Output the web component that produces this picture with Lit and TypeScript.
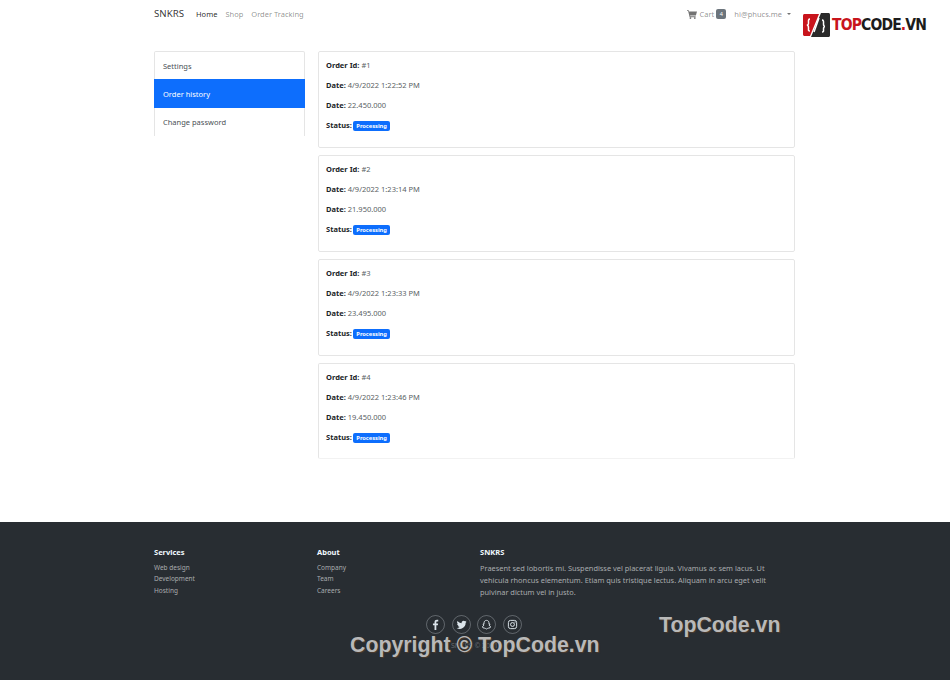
import { LitElement, html, css, svg } from "lit";
import { customElement } from "lit/decorators.js";

const orders = [
  { id: 1, date: "4/9/2022 1:22:52 PM", total: "22.450.000" },
  { id: 2, date: "4/9/2022 1:23:14 PM", total: "21.950.000" },
  { id: 3, date: "4/9/2022 1:23:33 PM", total: "23.495.000" },
  { id: 4, date: "4/9/2022 1:23:46 PM", total: "19.450.000" },
];

const icons = [
  svg`<path fill="currentColor" d="M9.2 16V9.1h2.2l.4-2.6H9.2V4.9c0-.8.3-1.3 1.4-1.3H12V1.2C11.700 1.100 10.900 1 10 1 8 1 6.600 2.200 6.600 4.500v2H4.300v2.600h2.300V16z"/>`,
  svg`<path fill="currentColor" d="M15.500 3.900c-.5.200-1.100.4-1.700.5.600-.4 1.100-1 1.300-1.700-.6.300-1.200.6-1.900.7a3 3 0 0 0-5.100 2.700A8.400 8.400 0 0 1 2 3a3 3 0 0 0 .9 4c-.5 0-1-.2-1.400-.4 0 1.500 1 2.700 2.400 3-.4.100-.9.100-1.300 0 .4 1.200 1.500 2.100 2.800 2.100A6 6 0 0 1 .9 13a8.500 8.500 0 0 0 13.100-7.500c.6-.4 1.100-1 1.500-1.600z"/>`,
  svg`<path fill="none" stroke="currentColor" stroke-width="1.300" stroke-linejoin="round" d="M8 2c2.200 0 3.600 1.600 3.600 3.600v1.900l1.400-.3c.3.300.2.700-.2.900l-1 .5c.3 1.300 1.300 2.400 2.500 2.900-.1.500-.9.700-1.800.9l-.3 1c-1-.2-1.900-.2-2.600.3-.6.500-1 .8-1.600.8s-1-.3-1.600-.8c-.7-.5-1.600-.5-2.600-.3l-.3-1c-.9-.2-1.700-.4-1.800-.9 1.200-.5 2.200-1.600 2.500-2.900l-1-.5c-.4-.2-.5-.6-.2-.9l1.400.3V5.600C4.400 3.600 5.800 2 8 2z"/>`,
  svg`<rect x="2" y="2" width="12" height="12" rx="3.200" fill="none" stroke="currentColor" stroke-width="1.400"/><circle cx="8" cy="8" r="2.800" fill="none" stroke="currentColor" stroke-width="1.400"/><circle cx="11.600" cy="4.400" r=".9" fill="currentColor"/>`,
];

@customElement("app-root")
export class AppRoot extends LitElement {
  static styles = css`
    :host {
      display: flex;
      flex-direction: column;
      position: relative;
      height: 680px;
      overflow: hidden;
      background: #fff;
      color: #212529;
      font-family: "Noto Sans", "Open Sans", sans-serif;
      font-size: 7.500px;
      line-height: 12px;
    }
    .nav {
      height: 28px;
      padding: 0 159px 0 154px;
      display: flex;
      align-items: center;
      color: rgba(0, 0, 0, 0.45);
    }
    .brand { font-size: 9.700px; color: rgba(0, 0, 0, 0.8); margin-right: 12px; }
    .links { display: flex; gap: 8px; flex: 1; }
    .links .on { color: rgba(0, 0, 0, 0.85); }
    .right { display: flex; align-items: center; }
    .cart { width: 10px; height: 10px; margin-right: 2px; color: rgba(0, 0, 0, 0.55); }
    .count {
      background: #6c757d;
      color: #fff;
      font-size: 5.500px;
      line-height: 10px;
      padding: 0 3.500px;
      border-radius: 2px;
      margin: 0 8px 0 2px;
    }
    .caret {
      width: 0;
      height: 0;
      margin-left: 5px;
      border: 2.500px solid transparent;
      border-top-color: rgba(0, 0, 0, 0.55);
      border-bottom: 0;
    }
    .main {
      flex: 1;
      padding: 23px 155px 0 154px;
      display: grid;
      grid-template-columns: 151px 477px;
      gap: 13px;
      align-items: start;
    }
    .menu {
      border: 1px solid rgba(0, 0, 0, 0.1);
      border-bottom: 0;
      border-radius: 2px 2px 0 0;
      display: grid;
      grid-template-rows: 27px 29px 28px;
    }
    .menu div { display: flex; align-items: center; padding: 0 8px; color: #4a4f55; }
    .menu .active { background: #0d6efd; color: #fff; margin: 0 -1px; padding-left: 9px; }
    .list { display: flex; flex-direction: column; gap: 7px; }
    .card {
      height: 97px;
      box-sizing: border-box;
      border: 1px solid rgba(0, 0, 0, 0.1);
      border-radius: 2px;
      padding: 7px 7px;
      display: flex;
      flex-direction: column;
      gap: 8px;
    }
    .card:last-child { height: 96px; border-bottom-color: rgba(0, 0, 0, 0.05); }
    b { font-weight: 700; color: #212529; }
    .val { color: #5a5f65; }
    .badge {
      display: inline-block;
      background: #0d6efd;
      color: #fff;
      font-size: 5.700px;
      font-weight: 700;
      line-height: 10px;
      padding: 0 3.500px;
      border-radius: 2px;
      margin-left: -1px;
    }
    footer {
      height: 158px;
      box-sizing: border-box;
      background: #282d32;
      color: #a9acae;
      padding: 24px 155px 0 154px;
    }
    .cols {
      display: grid;
      grid-template-columns: 151px 151px 1fr;
      gap: 12px;
      font-size: 6.500px;
      line-height: 11.400px;
    }
    h3 { margin: 0 0 4px; font-size: 7.500px; line-height: 12px; color: #f0f9ff; font-weight: 700; }
    .desc { font-size: 7.400px; line-height: 12px; margin: 0; padding-right: 20px; }
    .socials { display: flex; justify-content: center; gap: 6.500px; margin: 17px 0 0 -1px; }
    .socials span {
      width: 19px;
      height: 19px;
      box-sizing: border-box;
      border: 1px solid rgba(240, 249, 255, 0.28);
      border-radius: 50%;
      display: flex;
      align-items: center;
      justify-content: center;
      color: rgba(240, 249, 255, 0.9);
    }
    .socials svg { width: 11px; height: 11px; }
    .copy { text-align: center; font-size: 7px; margin-top: 6px; color: rgba(240, 249, 255, 0.3); }
    .mark {
      position: absolute;
      font-family: "Liberation Sans", Arial, sans-serif;
      font-weight: 700;
      font-size: 21.300px;
      line-height: 24px;
      color: #b9b9b9;
      text-shadow: 1px 1px 1px #4c3a2c;
      white-space: nowrap;
    }
    .m1 { left: 350px; top: 633px; }
    .m2 { left: 659px; top: 613px; }
    .logo {
      position: absolute;
      left: 803px;
      top: 12px;
      display: flex;
      align-items: center;
      gap: 2px;
    }
    .logo svg { width: 27px; height: 26px; }
    .logo span {
      font-family: "DejaVu Sans", sans-serif;
      font-weight: 700;
      font-stretch: condensed;
      font-size: 15.500px;
      line-height: 26px;
      letter-spacing: -0.850px;
      color: #1c1c1c;
      white-space: nowrap;
    }
    .logo i { font-style: normal; color: #c8141c; }
  `;

  render() {
    return html`
      <nav class="nav">
        <span class="brand">SNKRS</span>
        <div class="links"><span class="on">Home</span><span>Shop</span><span>Order Tracking</span></div>
        <div class="right">
          <svg class="cart" viewBox="0 0 16 16"><path fill="currentColor" d="M0 2h2.700l.6 2H16l-1.800 6.500H5l.3 1.200h8.500V13H4.200L1.800 3.300H0z"/><circle cx="5.500" cy="14.500" r="1.400" fill="currentColor"/><circle cx="12.500" cy="14.500" r="1.400" fill="currentColor"/></svg>
          <span>Cart</span><span class="count">4</span>
          <span>hi@phucs.me</span><span class="caret"></span>
        </div>
      </nav>
      <div class="main">
        <div class="menu">
          <div>Settings</div>
          <div class="active">Order history</div>
          <div>Change password</div>
        </div>
        <div class="list">
          ${orders.map(
            (o) => html`
              <div class="card">
                <div><b>Order Id:</b> <span class="val">#${o.id}</span></div>
                <div><b>Date:</b> <span class="val">${o.date}</span></div>
                <div><b>Date:</b> <span class="val">${o.total}</span></div>
                <div><b>Status:</b> <span class="badge">Processing</span></div>
              </div>
            `
          )}
        </div>
      </div>
      <footer>
        <div class="cols">
          <div><h3>Services</h3><div>Web design</div><div>Development</div><div>Hosting</div></div>
          <div><h3>About</h3><div>Company</div><div>Team</div><div>Careers</div></div>
          <div>
            <h3>SNKRS</h3>
            <p class="desc">Praesent sed lobortis mi. Suspendisse vel placerat ligula. Vivamus ac sem lacus. Ut vehicula rhoncus elementum. Etiam quis tristique lectus. Aliquam in arcu eget velit pulvinar dictum vel in justo.</p>
          </div>
        </div>
        <div class="socials">
          ${icons.map((i) => html`<span><svg viewBox="0 0 16 16">${i}</svg></span>`)}
        </div>
        <div class="copy">SNKRS © 2021</div>
      </footer>
      <div class="mark m1">Copyright © TopCode.vn</div>
      <div class="mark m2">TopCode.vn</div>
      <div class="logo">
        <svg viewBox="0 0 27 26">
          <path fill="#c8141c" d="M1.500 2H16L7 24H1.500C.7 24 0 23.300 0 22.500V3.500C0 2.700.7 2 1.500 2z"/>
          <path fill="#2a2a2a" d="M18 1h7.500c.8 0 1.500.7 1.500 1.500v21c0 .8-.7 1.500-1.500 1.500H8z"/>
          <path fill="none" stroke="#fff" stroke-width="1.500" d="M7 7C5 7 5.500 9 5.500 11S5 13 3.800 13C5 13 5.500 14 5.500 16s-.5 3 1.500 3M16 6 11 20M19 8c2 0 1.500 2 1.500 4s.5 2.500 1.500 2.500c-1 0-1.500.5-1.500 2.500s.5 3-1.500 3"/>
        </svg>
        <span><i>TOP</i>CODE<i>.</i>VN</span>
      </div>
    `;
  }
}
